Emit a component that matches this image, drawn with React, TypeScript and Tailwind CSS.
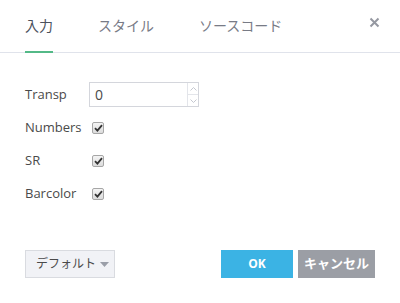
import React, { useState } from 'react'

const tabs = ['入力', 'スタイル', 'ソースコード']

const rows = [
  { label: 'Numbers' },
  { label: 'SR' },
  { label: 'Barcolor' },
]

function Check() {
  return (
    <span className="ml-[3px] flex h-[12px] w-[12px] items-center justify-center rounded-[2px] border border-[#a6a6a6] bg-gradient-to-b from-[#f4f4f4] to-[#dcdcdc]">
      <svg width="9" height="8" viewBox="0 0 9 8">
        <path d="M1 4.2 L3.4 6.6 L8 1.2" fill="none" stroke="#333" strokeWidth="1.8" />
      </svg>
    </span>
  )
}

export default function App() {
  const [active] = useState(0)

  return (
    <div
      className="flex h-[303px] w-[400px] flex-col bg-white text-[#4a4a4a]"
      style={{ fontFamily: '"Open Sans", "Noto Sans CJK JP", sans-serif' }}
    >
      {/* Header tabs */}
      <div className="relative flex h-[53px] items-end gap-[45px] border-b border-[#e0e3eb] pl-[25px]">
        {tabs.map((t, i) => (
          <div
            key={t}
            className={`-mb-px flex h-[53px] items-center border-b-2 text-[14px] leading-none ${
              i === active ? 'border-[#53b987] text-[#4c525e]' : 'border-transparent text-[#787b86]'
            }`}
          >
            {t}
          </div>
        ))}
        <div className="absolute right-[20px] top-[17px] text-[#9598a1]">
          <svg width="11" height="11" viewBox="0 0 11 11">
            <path d="M1.5 1.5 L9.5 9.5 M9.5 1.5 L1.5 9.5" stroke="currentColor" strokeWidth="2" />
          </svg>
        </div>
      </div>

      {/* Body */}
      <div className="flex flex-col pl-[25px] pt-[25px] text-[13px]">
        <div className="flex h-[33px] items-center">
          <span className="w-[64px]">Transp</span>
          <div className="flex h-[25px] w-[110px] border border-[#d4d6dc]">
            <span className="flex flex-1 items-center pl-[5px] text-[14px] text-[#4a4a4a]">0</span>
            <div className="flex w-[11px] flex-col border-l border-[#e3e5ea]">
              <div className="flex flex-1 items-center justify-center border-b border-[#e3e5ea]">
                <svg width="7" height="4" viewBox="0 0 7 4">
                  <path d="M0.5 3.5 L3.5 0.5 L6.5 3.5" fill="none" stroke="#c5c8d0" strokeWidth="1" />
                </svg>
              </div>
              <div className="flex flex-1 items-center justify-center">
                <svg width="7" height="4" viewBox="0 0 7 4">
                  <path d="M0.5 0.5 L3.5 3.5 L6.5 0.5" fill="none" stroke="#c5c8d0" strokeWidth="1" />
                </svg>
              </div>
            </div>
          </div>
        </div>
        {rows.map((r) => (
          <div key={r.label} className="flex h-[33px] items-center">
            <span className="w-[64px]">{r.label}</span>
            <Check />
          </div>
        ))}
      </div>

      {/* Footer */}
      <div className="mt-auto flex items-center px-[25px] pb-[25px]">
        <button className="flex h-[28px] w-[90px] items-center gap-[4px] border border-[#d9dbe0] bg-[#f1f2f6] pl-[10px] text-[12px] text-[#4a4a4a]">
          デフォルト
          <svg width="9" height="5" viewBox="0 0 9 5">
            <path d="M0 0 L9 0 L4.5 5 Z" fill="#9a9ea8" />
          </svg>
        </button>
        <div className="ml-auto flex gap-[5px]">
          <button className="h-[28px] w-[72px] bg-[#3bb3e4] text-[12px] font-bold text-white">OK</button>
          <button className="h-[28px] w-[77px] bg-[#9b9ea5] text-[13px] font-bold text-white">キャンセル</button>
        </div>
      </div>
    </div>
  )
}
